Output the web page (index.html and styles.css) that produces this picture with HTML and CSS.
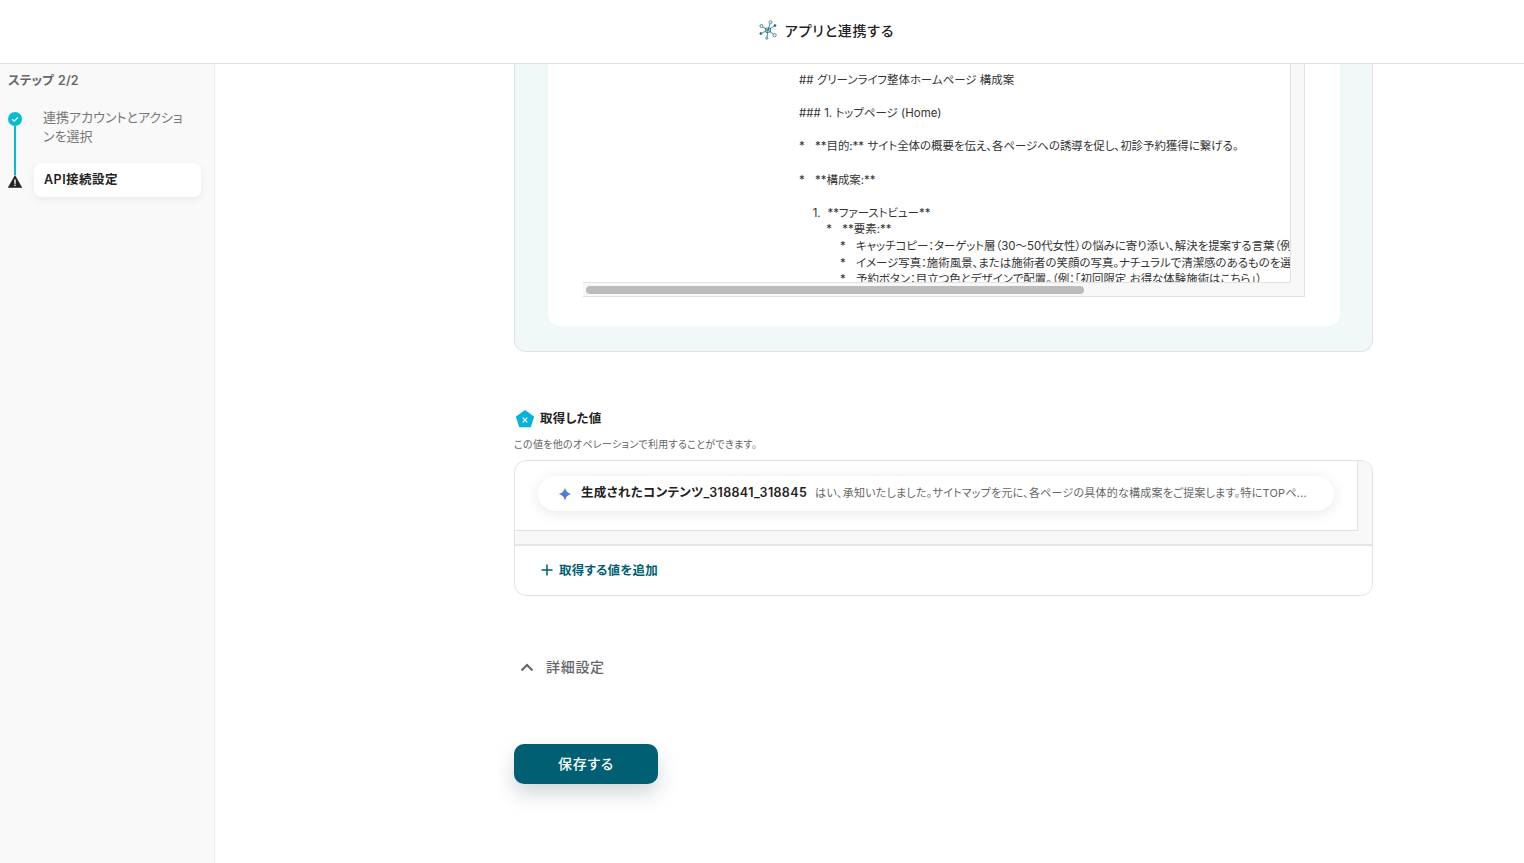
FILE: index.html
```html
<!DOCTYPE html>
<html lang="ja">
  <head>
    <meta charset="UTF-8" />
    <meta name="viewport" content="width=device-width, initial-scale=1.0" />
    <title>アプリと連携する</title>
    <link rel="stylesheet" href="styles.css">
  </head>
  <body>
    <header class="topbar">
      <svg class="topbar-icon" width="18" height="20" viewBox="0 0 18 20" fill="none" stroke="#1f6f88" stroke-width=".8">
        <path d="M9 10 L11.2 3 M9 10 L3.2 6.6 M9 10 L15.5 6 M9 10 L2.5 13.2 M9 10 L14.8 14.6 M9 10 L8 17.2" />
        <path d="M6.4 8.2 L11.4 8 L11.6 12 L7 12.6 Z" />
        <circle cx="11.5" cy="2.2" r="1.5" fill="#fff" />
        <circle cx="2.4" cy="6" r="1.5" fill="#fff" />
        <circle cx="16" cy="5.6" r="1" fill="#1f6f88" />
        <circle cx="1.8" cy="13.6" r="1" fill="#1f6f88" />
        <circle cx="15.6" cy="15.2" r="1.6" fill="#fff" />
        <circle cx="7.8" cy="18.2" r="1.1" fill="#fff" />
      </svg>
      <span class="topbar-title">アプリと連携する</span>
    </header>

    <div class="layout">
      <aside class="sidebar">
        <h2 class="step-count">ステップ 2/2</h2>
        <div class="steps">
          <div class="rail">
            <svg width="14" height="14" viewBox="0 0 14 14">
              <circle cx="7" cy="7" r="7" fill="#08bcd0" />
              <path d="M4.2 7.2 L6.2 9.1 L9.9 5.3" fill="none" stroke="#fff" stroke-width="1.2" />
            </svg>
            <div class="rail-line"></div>
            <svg width="14" height="13" viewBox="0 0 14 13">
              <path d="M7 .6 L13.8 12.6 H.2 Z" fill="#222" stroke="#222" stroke-linejoin="round" stroke-width=".6" />
              <rect x="6.3" y="4.4" width="1.4" height="4.4" fill="#fff" />
              <rect x="6.3" y="9.6" width="1.4" height="1.4" fill="#fff" />
            </svg>
          </div>
          <div class="step-labels">
            <p class="step-done">連携アカウントとアクションを選択</p>
            <div class="step-current">API接続設定</div>
          </div>
        </div>
      </aside>

      <main class="content">
        <section class="result-panel">
          <div class="result-inner">
            <div class="code-box">
              <pre class="code-text">## グリーンライフ整体ホームページ 構成案

### 1. トップページ (Home)

*   **目的:** サイト全体の概要を伝え、各ページへの誘導を促し、初診予約獲得に繋げる。

*   **構成案:**

    1.  **ファーストビュー**
        *   **要素:**
            *   キャッチコピー：ターゲット層（30～50代女性）の悩みに寄り添い、解決を提案する言葉（例：「その不調、諦めないで」）
            *   イメージ写真：施術風景、または施術者の笑顔の写真。ナチュラルで清潔感のあるものを選ぶ。
            *   予約ボタン：目立つ色とデザインで配置。（例：「初回限定 お得な体験施術はこちら」）</pre>
              <div class="track-right"></div>
              <div class="track-bottom"><div class="thumb"></div></div>
            </div>
          </div>
        </section>

        <div class="values-head">
          <svg width="20" height="20" viewBox="0 0 20 20">
            <path d="M10 1 L18.6 7.2 C19 7.5 19.1 7.9 19 8.3 L16 17.4 C15.9 17.9 15.5 18.2 15 18.2 H5 C4.5 18.2 4.1 17.9 4 17.4 L1 8.3 C.9 7.9 1 7.5 1.4 7.2 Z" fill="#04b2dc" />
            <path d="M7.8 8.6 L12.2 13.4 M12.2 8.6 L7.8 13.4" stroke="#fff" stroke-width="1.3" />
          </svg>
          <h3>取得した値</h3>
        </div>
        <p class="values-note">この値を他のオペレーションで利用することができます。</p>

        <section class="values-box">
          <div class="values-scroll">
            <div class="values-body">
              <div class="value-pill">
                <svg width="14" height="14" viewBox="0 0 14 14">
                  <defs>
                    <linearGradient id="spark" x1="0" y1="1" x2="1" y2="0">
                      <stop offset="0" stop-color="#6a5fc8" />
                      <stop offset="1" stop-color="#2f9be0" />
                    </linearGradient>
                  </defs>
                  <path d="M7 0 C7.6 4.2 9.6 6.3 14 7 C9.6 7.7 7.6 9.8 7 14 C6.4 9.8 4.4 7.7 0 7 C4.4 6.3 6.4 4.2 7 0 Z" fill="url(#spark)" />
                </svg>
                <span class="value-name">生成されたコンテンツ_318841_318845</span>
                <span class="value-text">はい、承知いたしました。サイトマップを元に、各ページの具体的な構成案をご提案します。特にTOPペ...</span>
              </div>
            </div>
            <div class="values-track-right"></div>
            <div class="values-track-bottom"></div>
          </div>
          <div class="add-row">
            <svg width="12" height="12" viewBox="0 0 12 12">
              <path d="M6 .5 V11.5 M.5 6 H11.5" stroke="#005f73" stroke-width="1.5" />
            </svg>
            <span class="add-label">取得する値を追加</span>
          </div>
        </section>

        <div class="detail-row">
          <svg width="14" height="9" viewBox="0 0 14 9">
            <path d="M1.5 7.5 L7 2 L12.5 7.5" fill="none" stroke="#666" stroke-width="2" />
          </svg>
          <span>詳細設定</span>
        </div>

        <button class="save-btn">保存する</button>
      </main>
    </div>
  </body>
</html>
```

FILE: styles.css
```css
* {
  box-sizing: border-box;
}

html,
body {
  height: 100%;
}

body {
  margin: 0;
  overflow: hidden;
  display: flex;
  flex-direction: column;
  background-color: #ffffff;
  color: #222222;
  font-family: Inter, "Noto Sans CJK JP", sans-serif;
  font-feature-settings: "palt";
}

/* Top bar */
.topbar {
  height: 64px;
  flex-shrink: 0;
  display: flex;
  justify-content: center;
  align-items: center;
  gap: 8px;
  padding: 0 0 4px 129px;
  border-bottom: 1px solid #e2e2e2;
}

.topbar-title {
  font-size: 14px;
  font-weight: 500;
  letter-spacing: 0.8px;
}

.layout {
  flex: 1;
  display: flex;
  min-height: 0;
}

/* Sidebar */
.sidebar {
  width: 215px;
  flex-shrink: 0;
  padding: 9px 13px 0 8px;
  background-color: #f9f9f9;
  border-right: 1px solid #eeeeee;
}

.step-count {
  margin: 0;
  font-size: 12.5px;
  font-weight: 600;
  line-height: 16px;
  letter-spacing: 0.1px;
  word-spacing: 1px;
  color: #666666;
}

.steps {
  display: flex;
  margin-top: 23px;
}

.rail {
  width: 14px;
  display: flex;
  flex-direction: column;
  align-items: center;
  flex-shrink: 0;
}

.rail svg {
  flex-shrink: 0;
}

.rail-line {
  flex: 1;
  width: 2px;
  background-color: #08bcd0;
}

.step-labels {
  flex: 1;
  margin-left: 12px;
  margin-top: -4px;
  margin-bottom: -9px;
}

.step-done {
  margin: 0 0 17px;
  padding: 0 16px 0 9px;
  font-size: 13px;
  line-height: 19px;
  color: #777777;
}

.step-current {
  height: 34px;
  padding: 0 0 3px 10px;
  display: flex;
  align-items: center;
  background-color: #ffffff;
  border-radius: 8px;
  box-shadow: 0 3px 10px rgba(0, 0, 0, 0.06);
  font-size: 12.5px;
  font-weight: 600;
  letter-spacing: 0.5px;
}

/* Main column */
.content {
  flex: 1;
  min-width: 0;
  padding-left: 299px;
}

.result-panel {
  width: 859px;
  height: 288px;
  padding: 0 32px 25px 33px;
  background-color: #f1f9f8;
  border: 1px solid #e2e2e2;
  border-top: none;
  border-radius: 0 0 12px 12px;
}

.result-inner {
  height: 100%;
  padding: 0 35px 29px;
  background-color: #ffffff;
  border-radius: 0 0 12px 12px;
}

.code-box {
  height: 100%;
  display: grid;
  grid-template-columns: 1fr 15px;
  grid-template-rows: 1fr 14px;
}

.code-text {
  margin: 0;
  padding: 8px 0 0 216px;
  overflow: hidden;
  border-bottom: 1px solid #e2e2e2;
  font-family: inherit;
  font-size: 11.45px;
  line-height: 16.6px;
  word-spacing: 0.2px;
  color: #333333;
}

.track-right {
  background-color: #f8f8f8;
  border-left: 1px solid #e2e2e2;
  border-right: 1px solid #e2e2e2;
}

.track-bottom {
  grid-column: 1 / 3;
  padding: 3px;
  background-color: #f8f8f8;
  border-bottom: 1px solid #e2e2e2;
  border-right: 1px solid #e2e2e2;
}

.thumb {
  width: 498px;
  height: 8px;
  background-color: #bcbcbc;
  border-radius: 4px;
}

.values-head {
  margin: 57px 0 0 1px;
  display: flex;
  align-items: center;
  gap: 5px;
}

.values-head h3 {
  margin: 0 0 1px;
  font-size: 12.5px;
  font-weight: 600;
  line-height: 17px;
  letter-spacing: 0.2px;
}

.values-note {
  margin: 7px 0 0;
  font-size: 10px;
  line-height: 16px;
  letter-spacing: 0.3px;
  color: #666666;
}

.values-box {
  width: 859px;
  height: 136px;
  margin-top: 8px;
  border: 1px solid #e2e2e2;
  border-radius: 12px;
  overflow: hidden;
}

.values-scroll {
  height: 85px;
  display: grid;
  grid-template-columns: 1fr 15px;
  grid-template-rows: 1fr 13px;
  border-bottom: 2px solid #e6e6e6;
}

.values-body {
  padding: 15px 23px 0;
  border-bottom: 1px solid #e2e2e2;
}

.value-pill {
  height: 35px;
  padding: 0 16px 4px 20px;
  display: flex;
  align-items: center;
  background-color: #ffffff;
  border-radius: 18px;
  box-shadow: 0 2px 14px rgba(0, 0, 0, 0.1);
  white-space: nowrap;
}

.value-pill svg {
  margin-top: 4px;
}

.value-name {
  margin-left: 9px;
  font-size: 12.5px;
  font-weight: 600;
  letter-spacing: 0.35px;
}

.value-text {
  margin-left: 8px;
  font-size: 11px;
  letter-spacing: 0.24px;
  color: #666666;
}

.values-track-right {
  background-color: #f8f8f8;
  border-left: 1px solid #e2e2e2;
}

.values-track-bottom {
  grid-column: 1 / 3;
  background-color: #f8f8f8;
}

.add-row {
  height: 49px;
  padding: 0 0 1px 26px;
  display: flex;
  align-items: center;
  gap: 6px;
  font-size: 12.5px;
  font-weight: 600;
  color: #005f73;
}

.add-label {
  margin-bottom: 2px;
  letter-spacing: 0.2px;
}

.detail-row {
  margin: 60px 0 0 6px;
  display: flex;
  align-items: center;
  gap: 12px;
  font-size: 14px;
  font-weight: 500;
  line-height: 22px;
  letter-spacing: 0.7px;
  color: #666666;
}

.save-btn {
  display: block;
  width: 144px;
  height: 40px;
  margin-top: 66px;
  padding: 0 0 3px;
  background-color: #005f73;
  border: none;
  border-radius: 10px;
  box-shadow: 0 10px 20px rgba(0, 40, 60, 0.18);
  color: #ffffff;
  font-family: inherit;
  font-feature-settings: inherit;
  font-size: 14px;
  font-weight: 500;
  letter-spacing: 0.7px;
  cursor: pointer;
}
```
